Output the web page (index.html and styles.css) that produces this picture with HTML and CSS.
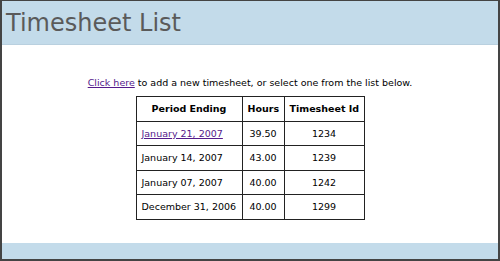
FILE: index.html
```html
<!DOCTYPE html>
<html>
<head>
<meta charset="utf-8">
<link rel="stylesheet" href="styles.css">
</head>
<body>
<div class="frame">
  <header class="banner"><h1 class="title">Timesheet List</h1></header>
  <main class="content">
    <p class="intro"><a href="#" class="link">Click here</a> to add a new timesheet, or select one from the list below.</p>
    <table class="sheets">
      <colgroup><col class="w1"><col class="w2"><col class="w3"></colgroup>
      <thead>
        <tr><th>Period Ending</th><th>Hours</th><th>Timesheet Id</th></tr>
      </thead>
      <tbody>
        <tr><td class="c1"><a href="#" class="link">January 21, 2007</a></td><td>39.50</td><td>1234</td></tr>
        <tr><td class="c1">January 14, 2007</td><td>43.00</td><td>1239</td></tr>
        <tr><td class="c1">January 07, 2007</td><td>40.00</td><td>1242</td></tr>
        <tr><td class="c1">December 31, 2006</td><td>40.00</td><td>1299</td></tr>
      </tbody>
    </table>
  </main>
  <footer class="footer"></footer>
</div>
</body>
</html>
```
FILE: styles.css
```css
html, body { margin: 0; padding: 0; background: #fff; }
.frame {
  width: 500px; height: 261px; box-sizing: border-box;
  border: 2px solid #444; border-top-width: 1px;
  display: flex; flex-direction: column;
  font-family: "DejaVu Sans", Verdana, sans-serif;
  color: #000;
}
.banner {
  background: #c3dbea; height: 44px; box-sizing: border-box;
  border-bottom: 1px solid #b9d0df;
  display: flex; align-items: center;
}
.title {
  margin: 0; padding-left: 4px;
  font-family: "DejaVu Sans", Verdana, sans-serif;
  font-weight: normal; font-size: 24px; color: #5a5a5a;
}
.content { flex: 1; display: flex; flex-direction: column; align-items: center; }
.intro { margin: 32px 0 8px; font-size: 9.5px; white-space: nowrap; }
.link { color: #551a8b; }
.sheets {
  border-collapse: collapse; font-size: 9.5px; table-layout: fixed; width: 228px;
}
.w1 { width: 106px; }
.w2 { width: 42px; }
.w3 { width: 80px; }
.sheets th, .sheets td {
  border: 1px solid #222; height: 23.5px; padding: 0 5px; text-align: center; white-space: nowrap;
}
.sheets th { font-weight: bold; }
.sheets td.c1 { text-align: left; }
.footer { background: #c3dbea; height: 16px; }
```
